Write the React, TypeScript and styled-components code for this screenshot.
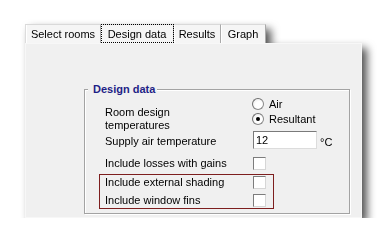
import styled, { createGlobalStyle } from 'styled-components'

const GlobalStyle = createGlobalStyle`
  html, body {
    margin: 0;
    padding: 0;
    background: #ffffff;
  }
  body {
    font-family: "Liberation Sans", Arial, sans-serif;
    font-size: 11px;
    color: #000;
  }
`

const Window = styled.div`
  width: 337px;
  margin: 24px 0 0 25px;
  filter: drop-shadow(5px 5px 4px rgba(0, 0, 0, 0.68));
`

const TabStrip = styled.div`
  display: flex;
  height: 19px;
`

const Tab = styled.div<{ $w: number; $active?: boolean }>`
  box-sizing: border-box;
  width: ${p => p.$w}px;
  height: 19px;
  display: flex;
  align-items: center;
  justify-content: center;
  background: #f5f5f5;
  border-top: 1px solid #d9d9d9;
  border-right: 1px solid #a9a9a9;
  box-shadow: inset 1px 0 0 #ffffff;
  outline: ${p => (p.$active ? '1px dotted #000' : 'none')};
  outline-offset: -1px;
  white-space: nowrap;
  &:first-child {
    border-left: 1px solid #dcdcdc;
  }
`

const Panel = styled.div`
  box-sizing: border-box;
  height: 175px;
  background: #f0f0f0;
  border: 1px solid #f7f7f7;
  padding: 45px 11px 0 58px;
`

const Group = styled.div`
  position: relative;
  border: 1px solid #a3a3a3;
  box-shadow: 1px 1px 0 #ffffff, inset 1px 1px 0 #ffffff;
  padding: 5px 0 4px 14px;
`

const GroupTitle = styled.span`
  position: absolute;
  top: -7px;
  left: 3px;
  padding: 0 2px 0 5px;
  background: #f0f0f0;
  color: #1f1f86;
  font-weight: bold;
  line-height: 13px;
`

const Row = styled.div<{ $h: number; $pad?: number }>`
  display: grid;
  grid-template-columns: 148px auto;
  height: ${p => p.$h}px;
  padding-left: ${p => p.$pad ?? 6}px;
  align-items: start;
`

const Label = styled.div<{ $top?: number }>`
  line-height: 13px;
  margin-top: ${p => p.$top ?? 0}px;
  white-space: nowrap;
`

const RadioGroup = styled.div`
  display: flex;
  flex-direction: column;
  margin: 1px 0 0 -1px;
`

const RadioLine = styled.label`
  display: flex;
  align-items: center;
  gap: 5px;
  height: 15px;
`

const RadioCircle = styled.span<{ $checked?: boolean }>`
  box-sizing: border-box;
  position: relative;
  width: 12px;
  height: 12px;
  border-radius: 50%;
  border: 1px solid #8a8a8a;
  border-top-color: #6f6f6f;
  border-left-color: #6f6f6f;
  background: radial-gradient(circle at 60% 60%, #ffffff 40%, #e2e2e2 100%);
  &::after {
    content: '';
    display: ${p => (p.$checked ? 'block' : 'none')};
    position: absolute;
    left: 3px;
    top: 3px;
    width: 4px;
    height: 4px;
    border-radius: 50%;
    background: #000;
  }
`

const InputWrap = styled.div`
  display: flex;
  align-items: center;
  gap: 3px;
`

const TextBox = styled.div`
  box-sizing: border-box;
  width: 64px;
  height: 18px;
  background: #fff;
  border: 1px solid #dcdcdc;
  border-top-color: #7a7a7a;
  border-left-color: #7a7a7a;
  padding-left: 2px;
  line-height: 16px;
`

const Unit = styled.span`
  margin-top: 3px;
`

const CheckBox = styled.span`
  display: block;
  box-sizing: border-box;
  width: 13px;
  height: 13px;
  background: #fff;
  border: 1px solid #d6d6d6;
  border-top-color: #7c7c7c;
  border-left-color: #7c7c7c;
`

const Highlight = styled.div`
  box-sizing: border-box;
  width: 175px;
  border: 1px solid #7d1e1e;
  padding: 1px 0 1px 0;
`

export default function App() {
  return (
    <>
      <GlobalStyle />
      <Window>
        <TabStrip>
          <Tab $w={76}>Select rooms</Tab>
          <Tab $w={73} $active>Design data</Tab>
          <Tab $w={47}>Results</Tab>
          <Tab $w={45}>Graph</Tab>
        </TabStrip>
        <Panel>
          <Group>
            <GroupTitle>Design data</GroupTitle>
            <Row $h={36}>
              <Label $top={11}>
                Room design
                <br />
                temperatures
              </Label>
              <RadioGroup>
                <RadioLine>
                  <RadioCircle />
                  Air
                </RadioLine>
                <RadioLine>
                  <RadioCircle $checked />
                  Resultant
                </RadioLine>
              </RadioGroup>
            </Row>
            <Row $h={26}>
              <Label $top={4}>Supply air temperature</Label>
              <InputWrap>
                <TextBox>12</TextBox>
                <Unit>°C</Unit>
              </InputWrap>
            </Row>
            <Row $h={17}>
              <Label $top={0}>Include losses with gains</Label>
              <CheckBox />
            </Row>
            <Highlight>
              <Row $h={18} $pad={5}>
                <Label>Include external shading</Label>
                <CheckBox />
              </Row>
              <Row $h={13} $pad={5}>
                <Label>Include window fins</Label>
                <CheckBox />
              </Row>
            </Highlight>
          </Group>
        </Panel>
      </Window>
    </>
  )
}
